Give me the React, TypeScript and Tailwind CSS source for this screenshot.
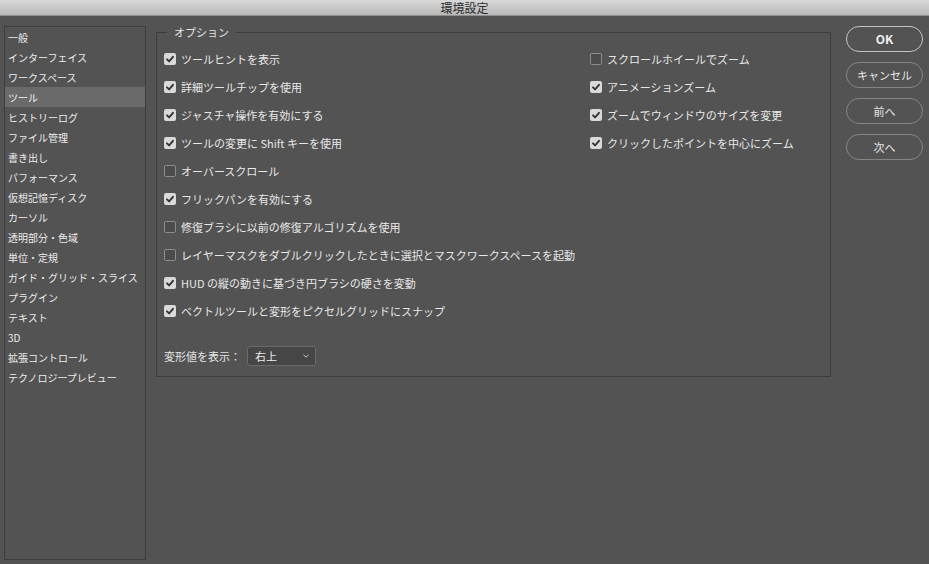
import { useState } from "react";

const FONT = { fontFamily: '"Noto Sans CJK JP", "Noto Sans", sans-serif' };

const categories = [
	"一般",
	"インターフェイス",
	"ワークスペース",
	"ツール",
	"ヒストリーログ",
	"ファイル管理",
	"書き出し",
	"パフォーマンス",
	"仮想記憶ディスク",
	"カーソル",
	"透明部分・色域",
	"単位・定規",
	"ガイド・グリッド・スライス",
	"プラグイン",
	"テキスト",
	"3D",
	"拡張コントロール",
	"テクノロジープレビュー",
];

const leftOptions = [
	{ label: "ツールヒントを表示", checked: true },
	{ label: "詳細ツールチップを使用", checked: true },
	{ label: "ジャスチャ操作を有効にする", checked: true },
	{ label: "ツールの変更に Shift キーを使用", checked: true },
	{ label: "オーバースクロール", checked: false },
	{ label: "フリックパンを有効にする", checked: true },
	{ label: "修復ブラシに以前の修復アルゴリズムを使用", checked: false },
	{ label: "レイヤーマスクをダブルクリックしたときに選択とマスクワークスペースを起動", checked: false },
	{ label: "HUD の縦の動きに基づき円ブラシの硬さを変動", checked: true },
	{ label: "ベクトルツールと変形をピクセルグリッドにスナップ", checked: true },
];

const rightOptions = [
	{ label: "スクロールホイールでズーム", checked: false },
	{ label: "アニメーションズーム", checked: true },
	{ label: "ズームでウィンドウのサイズを変更", checked: true },
	{ label: "クリックしたポイントを中心にズーム", checked: true },
];

const CheckRow = ({ label, checked }: { label: string; checked: boolean }) => {
	const [on, setOn] = useState(checked);
	return (
		<div
			className="h-[28px] flex items-center gap-[5px] cursor-default"
			onClick={() => setOn(!on)}
		>
			{on ? (
				<span className="w-[12px] h-[12px] rounded-[2px] bg-[#d9d9d9] flex items-center justify-center shrink-0">
					<svg width="12" height="12" viewBox="0 0 12 12">
						<path
							d="M3 6.3 L5.1 8.4 L9 3.8"
							fill="none"
							stroke="#333"
							strokeWidth="1.9"
							strokeLinecap="round"
							strokeLinejoin="round"
						/>
					</svg>
				</span>
			) : (
				<span className="w-[12px] h-[12px] rounded-[2px] border border-[#8c8c8c] bg-[#4b4b4b] shrink-0" />
			)}
			<span className="text-[11px] leading-[14px] text-[#e8e8e8] whitespace-nowrap">
				{label}
			</span>
		</div>
	);
};

const DialogButton = ({ label, primary = false }: { label: string; primary?: boolean }) => (
	<button
		className={
			primary
				? "h-[26px] w-[77px] rounded-full border border-[#c4c4c4] text-[12px] font-bold text-[#f0f0f0]"
				: "h-[26px] w-[77px] rounded-full border border-[#858585] text-[11px] text-[#e6e6e6]"
		}
	>
		{label}
	</button>
);

export default function App() {
	const selected = "ツール";
	return (
		<div className="h-screen w-full bg-[#535353] flex flex-col overflow-hidden" style={FONT}>
			<div className="h-[16px] shrink-0 bg-gradient-to-b from-[#d8d8d8] to-[#b8b8b8] border-b border-[#8e8e8e] flex justify-center">
				<span className="text-[12px] leading-[15px] text-[#2c2c2c]">環境設定</span>
			</div>

			<div className="flex-1 flex pt-[9px] pb-[4px] pl-[4px]">
				<div className="w-[142px] mt-[1px] border border-[#3d3d3d]">
					{categories.map((c) => (
						<div
							key={c}
							className={
								c === selected
									? "h-[20px] pl-[3px] flex items-center bg-[#6a6a6a] text-[10px] text-[#f0f0f0]"
									: "h-[20px] pl-[3px] flex items-center text-[10px] text-[#ececec]"
							}
						>
							{c}
						</div>
					))}
				</div>

				<div className="ml-[10px]">
					<fieldset className="w-[675px] border border-[#3d3d3d] pl-[7px] pt-[6px] pb-[10px]">
						<legend className="ml-[3px] px-[7px] text-[11px] leading-[14px] text-[#e4e4e4]">
							オプション
						</legend>
						<div className="flex">
							<div className="w-[426px] flex flex-col">
								{leftOptions.map((o) => (
									<CheckRow key={o.label} {...o} />
								))}
							</div>
							<div className="flex flex-col">
								{rightOptions.map((o) => (
									<CheckRow key={o.label} {...o} />
								))}
							</div>
						</div>
						<div className="mt-[21px] h-[20px] flex items-center gap-[6px]">
							<span className="text-[11px] text-[#e4e4e4]">変形値を表示：</span>
							<div className="h-[20px] w-[69px] rounded-[3px] border border-[#6a6a6a] bg-[#464646] flex items-center justify-between pl-[7px] pr-[5px]">
								<span className="text-[11px] text-[#ececec]">右上</span>
								<svg width="8" height="6" viewBox="0 0 8 6">
									<path d="M1.5 1.8 L4 4.2 L6.5 1.8" fill="none" stroke="#cfcfcf" strokeWidth="1" />
								</svg>
							</div>
						</div>
					</fieldset>
				</div>

				<div className="ml-[15px] pt-[1px] flex flex-col gap-[10px]">
					<DialogButton label="OK" primary />
					<DialogButton label="キャンセル" />
					<DialogButton label="前へ" />
					<DialogButton label="次へ" />
				</div>
			</div>
		</div>
	);
}
